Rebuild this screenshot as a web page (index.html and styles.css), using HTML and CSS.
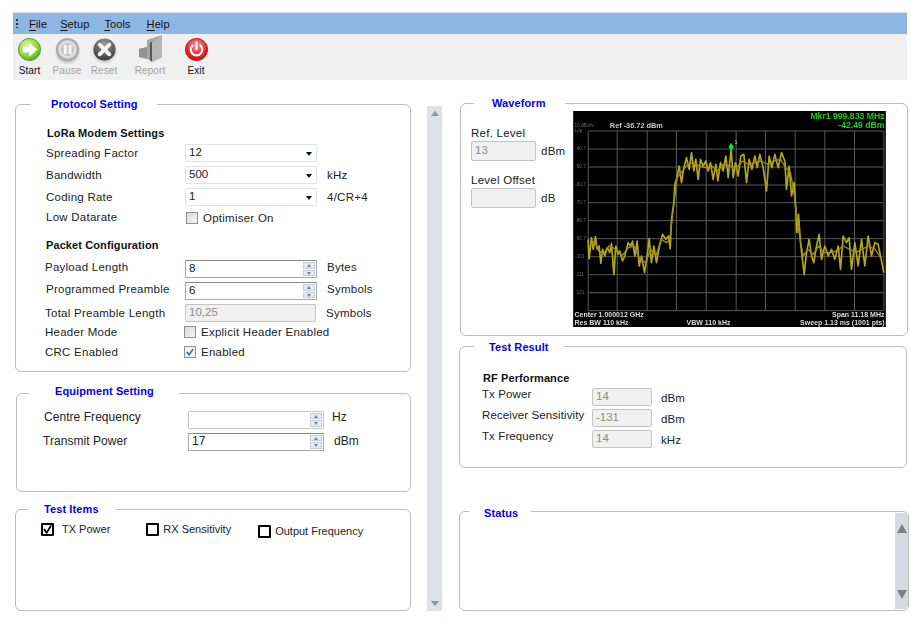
FILE: index.html
```html
<!DOCTYPE html>
<html lang="en">
<head>
<meta charset="utf-8">
<title>LoRa Test</title>
<link rel="stylesheet" href="styles.css">
</head>
<body>
<header class="head">
  <nav class="menubar">
    <span class="grip"></span>
    <span class="menu m-file"><u>F</u>ile</span>
    <span class="menu m-setup"><u>S</u>etup</span>
    <span class="menu m-tools"><u>T</u>ools</span>
    <span class="menu m-help"><u>H</u>elp</span>
  </nav>
  <div class="toolbar">
    <div class="tool t-start">
      <svg class="ico" viewBox="0 0 26 26"><defs><radialGradient id="g1" cx=".4" cy=".3" r=".8"><stop offset="0" stop-color="#d8f59a"/><stop offset=".6" stop-color="#8fd43c"/><stop offset="1" stop-color="#3f9a1a"/></radialGradient></defs><circle cx="13" cy="13" r="11.5" fill="url(#g1)" stroke="#4a9c28"/><path d="M6 10h7V6l8 7-8 7v-4H6z" fill="#fff" stroke="#dfe8d0" stroke-width=".5"/></svg>
      <span>Start</span>
    </div>
    <div class="tool off t-pause">
      <svg class="ico" viewBox="0 0 26 26"><circle cx="13" cy="13" r="11" fill="#d8d8d8" stroke="#a8a8a8" stroke-width="2"/><circle cx="13" cy="13" r="7.5" fill="#c4c4c4" stroke="#eee"/><rect x="9" y="8" width="3.2" height="10" fill="#f4f4f4"/><rect x="14" y="8" width="3.2" height="10" fill="#f4f4f4"/></svg>
      <span>Pause</span>
    </div>
    <div class="tool off t-reset">
      <svg class="ico" viewBox="0 0 26 26"><defs><radialGradient id="g2" cx=".5" cy=".25" r=".85"><stop offset="0" stop-color="#9a9a9a"/><stop offset="1" stop-color="#2e2e2e"/></radialGradient></defs><circle cx="13" cy="13" r="11.5" fill="url(#g2)"/><path d="M8 8l10 10M18 8L8 18" stroke="#f5f5f5" stroke-width="4" stroke-linecap="round"/></svg>
      <span>Reset</span>
    </div>
    <div class="tool off t-report">
      <svg class="ico-tall" viewBox="0 0 26 28"><path d="M2 14l8-2V5L25 0v22l-10 5-2-2-11-3z" fill="#a4a4a4"/><path d="M15 7L25 0v22l-10 5z" fill="#b6b6b6"/><path d="M13 8l2-1v20l-2-2z" fill="#555"/><path d="M2 14l8-2v11l-8-1z" fill="#949494"/></svg>
      <span>Report</span>
    </div>
    <div class="tool t-exit">
      <svg class="ico" viewBox="0 0 26 26"><defs><radialGradient id="g3" cx=".5" cy=".3" r=".8"><stop offset="0" stop-color="#ff8a8a"/><stop offset=".6" stop-color="#e8242a"/><stop offset="1" stop-color="#a80c10"/></radialGradient></defs><circle cx="13" cy="13" r="11.5" fill="url(#g3)" stroke="#b01216"/><path d="M8.8 8.8a6 6 0 1 0 8.4 0" fill="none" stroke="#fff" stroke-width="2.2" stroke-linecap="round"/><path d="M13 5.5v7" stroke="#fff" stroke-width="2.4" stroke-linecap="round"/></svg>
      <span>Exit</span>
    </div>
  </div>
</header>

<main class="main">
  <div class="col-left">
    <section class="panel p-protocol">
      <h2 class="legend l-protocol">Protocol Setting</h2>
      <h3 class="sub">LoRa Modem Settings</h3>
      <div class="row"><label>Spreading Factor</label><div class="combo">12<i></i></div></div>
      <div class="row"><label>Bandwidth</label><div class="combo">500<i></i></div><span class="unit">kHz</span></div>
      <div class="row"><label>Coding Rate</label><div class="combo">1<i></i></div><span class="unit">4/CR+4</span></div>
      <div class="row row-sm row-up"><label>Low Datarate</label><span class="check"></span><span class="check-text">Optimiser On</span></div>
      <h3 class="sub sub2">Packet Configuration</h3>
      <div class="row row-raise row-out"><label>Payload Length</label><div class="spin">8<b><i></i><i></i></b></div><span class="unit">Bytes</span></div>
      <div class="row row-raise"><label>Programmed Preamble</label><div class="spin">6<b><i></i><i></i></b></div><span class="unit">Symbols</span></div>
      <div class="row row-sm row-out row-total"><label>Total Preamble Length</label><div class="field total">10,25</div><span class="unit">Symbols</span></div>
      <div class="row row-sm row-out"><label>Header Mode</label><span class="check"></span><span class="check-text">Explicit Header Enabled</span></div>
      <div class="row row-sm row-out"><label>CRC Enabled</label><span class="check on"><svg viewBox="0 0 11 11"><path d="M2 5.5l2.5 3L9 2" fill="none" stroke="#3a5fa8" stroke-width="1.6"/></svg></span><span class="check-text">Enabled</span></div>
    </section>

    <section class="panel p-equipment">
      <h2 class="legend l-equipment">Equipment Setting</h2>
      <div class="row row-eq"><label>Centre Frequency</label><div class="spin spin-eq muted"><b><i></i><i></i></b></div><span class="unit">Hz</span></div>
      <div class="row row-eq"><label>Transmit Power</label><div class="spin spin-eq">17<b><i></i><i></i></b></div><span class="unit">dBm</span></div>
    </section>

    <section class="panel p-items">
      <h2 class="legend l-items">Test Items</h2>
      <div class="items">
        <span class="item i-tx"><span class="box"><svg viewBox="0 0 10 10"><path d="M1 4.5l3 4L9 .5" fill="none" stroke="#000" stroke-width="2"/></svg></span>TX Power</span>
        <span class="item i-rx"><span class="box"></span>RX Sensitivity</span>
        <span class="item i-of"><span class="box"></span>Output Frequency</span>
      </div>
    </section>
  </div>

  <div class="splitter"><i class="up"></i><i class="down"></i></div>

  <div class="col-right">
    <section class="panel p-wave">
      <h2 class="legend l-wave">Waveform</h2>
      <div class="wave-side">
        <div class="cap">Ref. Level</div>
        <div class="val-row"><div class="field lvl">13</div><span>dBm</span></div>
        <div class="cap cap2">Level Offset</div>
        <div class="val-row"><div class="field lvl"></div><span>dB</span></div>
      </div>
      <svg class="scope" viewBox="40 35 938 648">
        <rect x="40" y="35" width="938" height="648" fill="#000"/>
        <g stroke="#5a5a5a" stroke-width="3">
          <path d="M85 95V634M172 95V634M262 95V634M350 95V634M439 95V634M529 95V634M617 95V634M706 95V634M795 95V634M884 95V634M972 95V634"/>
          <path d="M85 95H972M85 149H972M85 203H972M85 257H972M85 310H972M85 364H972M85 418H972M85 472H972M85 526H972M85 580H972M85 634H972"/>
        </g>
        <polyline id="trace" fill="none" stroke="#b3a71e" stroke-width="5" stroke-linejoin="round" points="85,420 88,478 95,415 100,450 107,412 112,450 118,440 123,492 128,450 135,470 142,445 150,460 155,432 162,525 168,440 175,465 180,455 188,485 195,470 205,430 212,440 218,425 225,470 232,425 238,500 245,470 254,520 262,470 268,418 275,490 282,440 290,490 298,445 308,405 318,420 326,410 331,448 335,360 342,310 345,255 350,240 358,200 365,250 372,205 380,175 388,210 395,160 402,215 408,180 415,240 422,180 430,200 438,185 445,215 452,190 460,240 468,195 474,245 482,190 490,215 498,170 505,235 514,150 520,235 527,190 535,230 543,170 552,165 560,250 568,180 576,210 585,170 592,205 600,165 610,205 620,275 628,170 636,205 645,165 655,205 665,160 675,185 680,270 688,200 695,290 703,250 708,330 711,400 716,345 722,430 733,525 740,460 748,420 755,470 762,490 770,440 778,405 785,480 795,440 805,470 815,450 825,480 835,440 842,510 850,410 860,430 868,415 875,510 885,430 895,500 905,420 915,500 925,410 935,470 945,430 955,435 962,470 972,520"/>
        <polyline fill="none" stroke="#9c9118" stroke-width="4" stroke-linejoin="round" points="90,440 104,425 116,455 132,462 148,440 170,450 186,470 206,445 222,440 240,480 258,490 272,450 288,470 304,420 320,430 330,420 340,330 352,235 368,215 384,195 400,190 418,200 436,205 456,200 472,215 490,195 510,200 530,205 548,185 566,195 584,190 604,185 624,195 642,185 662,180 678,205 692,220 704,290 714,380 730,470 744,450 760,465 776,440 792,460 812,460 830,455 850,440 870,450 888,460 906,450 926,440 946,450 966,480"/>
        <path d="M514 130l8 13-8 13-8-13z" fill="#19e619"/>
        <g class="scope-tick">
          <text x="46" y="153">-40.7</text><text x="46" y="207">-50.7</text><text x="46" y="261">-60.7</text><text x="46" y="314">-70.7</text><text x="46" y="368">-80.7</text><text x="46" y="422">-90.7</text><text x="46" y="476">-101</text><text x="46" y="530">-111</text><text x="46" y="584">-121</text>
          <text x="44" y="84">10 dB/div</text><text x="44" y="98">Log</text>
        </g>
        <text class="scope-mark" x="524" y="134">1</text>
        <text class="scope-ref" x="150" y="86">Ref -36.72 dBm</text>
        <text class="scope-mkr" x="974" y="58" text-anchor="end">Mkr1 999.833 MHz</text>
        <text class="scope-mkr" x="974" y="86" text-anchor="end">-42.49 dBm</text>
        <g class="scope-foot">
          <text x="44" y="654">Center 1.000012 GHz</text>
          <text x="44" y="676">Res BW 110 kHz</text>
          <text x="380" y="676">VBW 110 kHz</text>
          <text x="974" y="654" text-anchor="end">Span 11.18 MHz</text>
          <text x="974" y="676" text-anchor="end">Sweep  1.13 ms (1001 pts)</text>
        </g>
      </svg>
    </section>

    <section class="panel p-result">
      <h2 class="legend l-result">Test Result</h2>
      <h3 class="sub">RF Performance</h3>
      <div class="res-row"><label>Tx Power</label><div class="field res">14</div><span>dBm</span></div>
      <div class="res-row"><label>Receiver Sensitivity</label><div class="field res">-131</div><span>dBm</span></div>
      <div class="res-row"><label>Tx Frequency</label><div class="field res">14</div><span>kHz</span></div>
    </section>

    <section class="panel p-status">
      <h2 class="legend l-status">Status</h2>
      <div class="status-bar"><i class="sup"></i><i class="sdown"></i></div>
    </section>
  </div>
</main>
</body>
</html>
```
FILE: styles.css
```css
* { box-sizing: border-box; }
html, body { margin: 0; background: #fff; }
body {
  width: 911px;
  height: 625px;
  overflow: hidden;
  padding-top: 12px;
  font-family: "Liberation Sans", Arial, sans-serif;
  font-size: 11.5px;
  letter-spacing: .25px;
  color: #222;
}
i { display: block; font-style: normal; }

/* head */
.head { margin-left: 13px; width: 894px; }
.menubar {
  height: 22px;
  background: #8db6e2;
  border-top: 1px solid #d5e3f2;
  display: flex;
  align-items: center;
  position: relative;
  color: #111;
  font-size: 11px;
  letter-spacing: .1px;
}
.grip {
  width: 2px; height: 9px; margin-left: 3px;
  background: repeating-linear-gradient(#333 0 2px, transparent 2px 4px);
}
.menu u { text-decoration-thickness: 1px; text-underline-offset: 2px; }
.m-file { margin-left: 11px; }
.m-setup { margin-left: 13px; }
.m-tools { margin-left: 15px; }
.m-help { margin-left: 16px; }
.toolbar {
  height: 46px;
  background: #f0f0f0;
  display: flex;
  position: relative;
}
.tool {
  display: flex;
  flex-direction: column;
  align-items: center;
  font-size: 10px;
  letter-spacing: .1px;
  color: #111;
  height: 46px;
  padding-top: 3px;
}
.tool span { margin-top: 2px; line-height: 13px; }
.off span { color: #a2a2a2; }
.off .ico { filter: drop-shadow(0 2px 1px rgba(0, 0, 0, .18)); }
.ico { width: 25px; height: 25px; display: block; flex: none; }
.ico-tall { width: 26px; height: 28px; display: block; margin-top: -2px; margin-bottom: -1px; flex: none; }
.t-start { width: 33px; }
.t-pause { width: 36px; margin-left: 3px; }
.t-reset { width: 36px; margin-left: 1px; }
.t-report { width: 40px; margin-left: 8px; }
.t-exit { width: 30px; margin-left: 11px; }

/* main layout */
.main {
  display: flex;
  padding-top: 23px;
  padding-left: 15px;
}
.col-left { width: 397px; padding-top: 1px; display: flex; flex-direction: column; }
.col-right { width: 450px; margin-left: 17px; display: flex; flex-direction: column; }
.splitter {
  width: 15px;
  height: 505px;
  margin-left: 15px;
  margin-top: 3px;
  background: #dde1e8;
  display: flex;
  flex-direction: column;
  justify-content: space-between;
  align-items: center;
  padding: 5px 0;
}
.up { width: 0; height: 0; border: 4px solid transparent; border-top: 0; border-bottom: 5px solid #8e969c; }
.down { width: 0; height: 0; border: 4px solid transparent; border-bottom: 0; border-top: 5px solid #8e969c; }

/* panels */
.panel {
  position: relative;
  border: 1px solid #bdbdbd;
  border-radius: 6px;
  background: #fff;
}
.legend {
  position: absolute;
  margin: 0;
  top: -8px;
  height: 15px;
  line-height: 15px;
  background: #fff;
  color: #0000f0;
  font-size: 11px;
  font-weight: bold;
  letter-spacing: .1px;
  white-space: nowrap;
}
.l-protocol { left: 15px; padding: 0 20px; width: 126px; }
.l-equipment { left: 12px; padding: 0 26px; width: 150px; top: -10px; }
.l-items { left: 12px; padding: 0 16px; width: 88px; }
.l-wave { left: 13px; padding: 0 18px; width: 91px; top: -8px; }
.l-result { left: 14px; padding: 0 15px; width: 90px; top: -7px; }
.l-status { left: 9px; padding: 0 15px; width: 62px; top: -6px; }

.p-protocol { width: 396px; height: 268px; padding: 19px 0 0 30px; }
.p-equipment { width: 395px; height: 99px; margin: 21px 0 0 1px; padding: 14px 0 0 27px; }
.p-items { width: 396px; height: 102px; margin-top: 17px; }
.p-wave { width: 448px; height: 233px; margin-left: 1px; padding: 7px 0 0 10px; display: flex; }
.p-result { width: 448px; height: 122px; margin-top: 10px; padding: 22px 0 0 22px; }
.p-status { width: 450px; height: 100px; margin-top: 43px; }

.sub { margin: 0 0 0 1px; height: 18px; line-height: 18px; font-size: 11px; letter-spacing: .1px; color: #111; font-weight: bold; }
.p-result .sub { height: 17px; }
.sub2 { margin: 8px 0 4px; }

/* rows */
.row { display: flex; align-items: center; height: 22px; }
.row-sm { height: 20px; }
.row label { width: 139px; flex: none; }
.row-up label, .row-up .unit { margin-bottom: 3px; }
.row-raise label, .row-raise .unit { margin-bottom: 5px; }
.row-out label { margin-left: -1px; width: 140px; }
.row-out .check { margin-left: -1px; }
.row-total { margin-top: 1px; margin-bottom: -1px; }
.unit { margin-left: 10px; }
.combo, .spin, .field { height: 18px; line-height: 15px; padding-left: 3px; position: relative; letter-spacing: 0; }
.combo { width: 132px; border: 1px solid #dfe3e8; border-radius: 2px; }
.combo i {
  position: absolute; right: 4px; top: 7px; width: 0; height: 0;
  border: 3.5px solid transparent; border-bottom: 0; border-top: 4px solid #111;
}
.spin { width: 132px; border: 1px solid #a9a9a9; border-top-color: #8a8a8a; border-radius: 1px; }
.spin b {
  position: absolute; right: 1px; top: 1px; width: 12px; height: 14px;
  display: flex; flex-direction: column; gap: 1px;
}
.spin b i { flex: 1; background: #e6ebf1; border: 1px solid #c8ccd2; position: relative; }
.spin b i::after {
  content: ""; position: absolute; left: 2.5px; top: 1px; width: 0; height: 0;
  border: 2.5px solid transparent; border-top: 0; border-bottom: 3px solid #6b7fa8;
}
.spin b i + i::after { border-bottom: 0; border-top: 3px solid #6b7fa8; }
.muted { border-color: #c8c8c8; }
.field { border: 1px solid #c4c4c4; border-radius: 2px; background: #f0f0f0; color: #8c8c8c; }
.total { width: 131px; }
.check {
  width: 12px; height: 12px; flex: none; margin-left: 1px;
  border: 1px solid #8f8f8f; background: linear-gradient(135deg, #d8d8d8, #f6f6f6);
}
.check svg { display: block; width: 10px; height: 10px; }
.check.on { background: #eef1f7; }
.check-text { margin-left: 5px; }

.row-eq { height: 23px; font-size: 12px; letter-spacing: .05px; }
.row-eq label { width: 144px; margin-bottom: 6px; }
.row-eq .unit { margin-bottom: 6px; margin-left: 8px; }
.row-eq + .row-eq { margin-top: -1px; }
.row-eq + .row-eq label, .row-eq + .row-eq .unit { margin-bottom: 2px; }
.row-eq + .row-eq label { margin-left: -1px; width: 145px; }
.row-eq + .row-eq .unit { margin-left: 10px; }
.spin-eq { width: 136px; height: 18px; }
.spin-eq b { height: 14px; }

/* test items */
.items { display: flex; height: 40px; position: relative; padding: 12px 0 0 25px; font-size: 11px; letter-spacing: 0; }
.item { display: flex; align-items: center; height: 14px; white-space: nowrap; }
.box { width: 13px; height: 13px; border: 2px solid #000; border-radius: 1px; flex: none; }
.box svg { display: block; width: 9px; height: 9px; }
.i-tx .box { margin-right: 8px; }
.i-rx { margin-left: 36px; }
.i-rx .box, .i-of .box { margin-right: 4px; }
.i-of { margin-left: 27px; margin-top: 2px; }

/* waveform */
.wave-side { width: 102px; flex: none; }
.cap { height: 16px; line-height: 16px; margin-top: 14px; }
.cap2 { margin-top: 11px; }
.val-row { display: flex; align-items: center; gap: 5px; }
.lvl { width: 65px; height: 20px; line-height: 17px; }
.scope { width: 313px; height: 216px; flex: none; display: block; filter: blur(.5px); }
.scope text { font-family: "Liberation Sans", Arial, sans-serif; letter-spacing: 0; }
.scope-tick { font-size: 14px; fill: #6e6e6e; }
.scope-mark { font-size: 16px; fill: #ccc; }
.scope-ref { font-size: 22px; font-weight: bold; fill: #c9c9c9; }
.scope-mkr { font-size: 26px; font-weight: bold; fill: #12d012; }
.scope-foot { font-size: 21px; font-weight: bold; fill: #dcdcdc; }

/* result */
.res-row { display: flex; align-items: center; height: 21px; letter-spacing: .1px; }
.res-row label { width: 110px; flex: none; margin-bottom: 5px; }
.res { width: 60px; letter-spacing: 0; }
.res-row span { margin-left: 9px; margin-top: 2px; }

/* status */
.status-bar {
  position: absolute;
  right: 0; top: 1px; bottom: 1px;
  width: 13px;
  background: #d5dae2;
  display: flex; flex-direction: column; justify-content: space-between; align-items: center;
  padding: 11px 0 10px;
}
.sup { width: 0; height: 0; border: 5.5px solid transparent; border-top: 0; border-bottom: 9px solid #808080; }
.sdown { width: 0; height: 0; border: 5.5px solid transparent; border-bottom: 0; border-top: 9px solid #808080; }
```
